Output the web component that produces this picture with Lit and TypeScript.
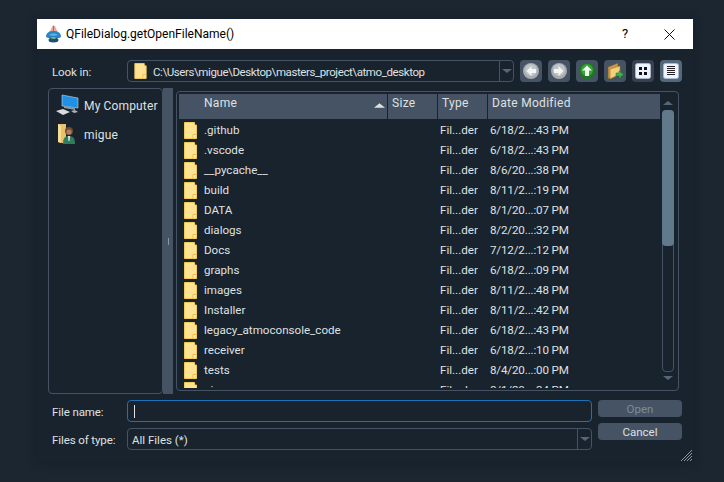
import { html, css, LitElement, svg } from "lit";
import { customElement } from "lit/decorators.js";

type FileRow = { name: string; date: string };

const ROWS: FileRow[] = [
  { name: ".github", date: "6/18/2...:43 PM" },
  { name: ".vscode", date: "6/18/2...:43 PM" },
  { name: "__pycache__", date: "8/6/20...:38 PM" },
  { name: "build", date: "8/11/2...:19 PM" },
  { name: "DATA", date: "8/1/20...:07 PM" },
  { name: "dialogs", date: "8/2/20...:32 PM" },
  { name: "Docs", date: "7/12/2...:12 PM" },
  { name: "graphs", date: "6/18/2...:09 PM" },
  { name: "images", date: "8/11/2...:48 PM" },
  { name: "Installer", date: "8/11/2...:42 PM" },
  { name: "legacy_atmoconsole_code", date: "6/18/2...:43 PM" },
  { name: "receiver", date: "6/18/2...:10 PM" },
  { name: "tests", date: "8/4/20...:00 PM" },
  { name: "ui", date: "8/1/20...:34 PM" },
];

const folder = (w = 13, h = 17) => html`<svg width=${w} height=${h} viewBox="0 0 13 17">
  <path d="M.5.5H10.5V3H12.5V16.5H.5Z" fill="#ffe392" stroke="#f3cb5a" />
  <path d="M9 16.5V12.5H12.5" fill="#fff0c0" stroke="#e8bb45" />
</svg>`;

const arrowCircle = (left: boolean) => html`<svg width="18" height="18" viewBox="0 0 18 18">
  <circle cx="9" cy="9" r="8" fill="#a7acb0" />
  <circle cx="9" cy="8" r="6" fill="#c0c4c7" />
  <path
    d=${left ? "M9.5 4L4.5 9L9.5 14V11H14V7H9.5Z" : "M8.5 4L13.5 9L8.5 14V11H4V7H8.5Z"}
    fill="#f4f5f5"
  />
</svg>`;

const caret = svg`<path d="M0 4L5 0L10 4Z" />`;

@customElement("app-root")
export class AppRoot extends LitElement {
  static styles = css`
    :host {
      display: block;
      width: 724px;
      height: 482px;
      overflow: hidden;
      background: #1b2631;
      font-family: Roboto, "Noto Sans", sans-serif;
      font-size: 12px;
      color: #dfe1e2;
    }
    .screen {
      padding: 19px 31px 20px 37px;
    }
    .window {
      position: relative;
      width: 656px;
      height: 443px;
      display: flex;
      flex-direction: column;
      background: #19232d;
      box-shadow: 0 0 10px rgba(10, 15, 20, 0.35);
    }
    .titlebar {
      height: 30px;
      flex: none;
      display: flex;
      align-items: center;
      background: #fff;
      color: #000;
      padding-left: 8px;
    }
    .title {
      margin-left: 4px;
      flex: 1;
    }
    .help {
      width: 16px;
      text-align: center;
      margin-right: 31px;
      font-size: 13px;
      padding-bottom: 2px;
    }
    .close {
      display: block;
      margin-right: 18px;
    }
    .body {
      flex: 1;
      display: flex;
      flex-direction: column;
      padding: 11px 11px 0;
    }
    .look {
      display: flex;
      height: 22px;
      align-items: center;
    }
    .label {
      width: 79px;
      padding: 2px 0 0 4px;
      box-sizing: border-box;
      flex: none;
      font-size: 11.5px;
      letter-spacing: -0.1px;
    }
    .combo {
      box-sizing: border-box;
      height: 22px;
      border: 1px solid #455364;
      border-radius: 4px;
      display: flex;
      align-items: center;
      flex: 1;
      min-width: 0;
    }
    .combo .value {
      flex: 1;
      display: flex;
      align-items: center;
      white-space: nowrap;
      font-size: 11.5px;
    }
    .path-text {
      padding-top: 2px;
      letter-spacing: -0.41px;
    }
    .path-icon {
      display: block;
      margin: 0 6px;
    }
    .drop {
      width: 13px;
      height: 100%;
      border-left: 1px solid #455364;
      display: flex;
      align-items: center;
      justify-content: center;
      flex: none;
    }
    .drop svg {
      display: block;
      fill: #54687a;
    }
    .tools {
      display: flex;
      gap: 6px;
      margin-left: 6px;
      flex: none;
    }
    .tool {
      width: 22px;
      height: 22px;
      border-radius: 4px;
      background: #455364;
      display: flex;
      align-items: center;
      justify-content: center;
    }
    .tool.dark {
      background: #37414f;
    }
    .tool.active {
      background: #54687a;
    }
    .middle {
      display: flex;
      height: 306px;
      margin-top: 6px;
    }
    .places {
      box-sizing: border-box;
      width: 115px;
      flex: none;
      border: 1px solid #455364;
      border-radius: 4px;
      padding: 2px 0 0 6px;
      display: flex;
      flex-direction: column;
      gap: 1px;
    }
    .place {
      display: flex;
      align-items: center;
      height: 28px;
      white-space: nowrap;
    }
    .place span {
      padding-top: 2px;
      letter-spacing: 0.15px;
    }
    .place svg {
      display: block;
      flex: none;
      margin-right: 5px;
    }
    .splitter {
      width: 10px;
      flex: none;
      background: #455364;
      display: flex;
      align-items: center;
      justify-content: center;
    }
    .splitter i {
      display: block;
      width: 1px;
      height: 7px;
      background: #8a97a5;
    }
    .pane {
      flex: 1;
      padding: 3px;
      min-width: 0;
    }
    .files {
      box-sizing: border-box;
      height: 100%;
      border: 1px solid #455364;
      border-radius: 4px;
      padding: 2px;
      display: flex;
    }
    .table {
      width: 481px;
      flex: none;
      display: flex;
      flex-direction: column;
    }
    .head {
      display: grid;
      grid-template-columns: 209px 50px 50px 1fr;
      height: 25px;
      flex: none;
    }
    .head div {
      position: relative;
      background: #455364;
      border-right: 1px solid #19232d;
      padding: 0 0 4px 4px;
      line-height: 19px;
      box-sizing: border-box;
      letter-spacing: 0.3px;
    }
    .head div:first-child {
      padding-left: 25px;
    }
    .head div:last-child {
      border-right: 0;
    }
    .sort {
      position: absolute;
      right: 2px;
      top: 9px;
      fill: #dfe1e2;
      display: block;
    }
    .rows {
      flex: 1;
      overflow: hidden;
      font-size: 11.6px;
    }
    .row {
      display: grid;
      grid-template-columns: 261px 50px 1fr;
      height: 20px;
      align-items: center;
      margin-top: 1px;
      margin-bottom: -1px;
    }
    .row .name {
      display: flex;
      align-items: center;
      padding-left: 5px;
    }
    .row .name svg {
      display: block;
      margin-right: 7px;
      flex: none;
    }
    .row .date {
      letter-spacing: -0.15px;
    }
    .scroll {
      flex: 1;
      display: flex;
      flex-direction: column;
      align-items: center;
      padding-top: 7px;
    }
    .scroll svg {
      display: block;
      fill: #54687a;
      flex: none;
    }
    .groove {
      box-sizing: border-box;
      width: 12px;
      height: 262px;
      margin-top: 5px;
      border: 1px solid #455364;
      border-radius: 4px;
      flex: none;
    }
    .thumb {
      height: 136px;
      margin: -1px;
      background: #60798b;
      border-radius: 4px;
    }
    .down {
      margin-top: 4px;
      transform: rotate(180deg);
    }
    .bottom {
      display: grid;
      grid-template-columns: 544px 90px;
      margin-top: 6px;
    }
    .input {
      box-sizing: border-box;
      height: 22px;
      border: 1px solid #1a72bb;
      border-radius: 4px;
      display: flex;
      align-items: center;
      padding-left: 6px;
    }
    .input i {
      display: block;
      width: 1px;
      height: 13px;
      background: #dfe1e2;
    }
    .buttons {
      grid-column: 2;
      grid-row: 1 / span 2;
      margin-left: 6px;
      display: flex;
      flex-direction: column;
      gap: 6px;
    }
    .btn {
      height: 17px;
      line-height: 19px;
      background: #455364;
      border-radius: 4px;
      text-align: center;
      font-size: 11.5px;
    }
    .btn.off {
      color: #788d9c;
    }
    .type-row {
      margin-top: 6px;
      display: flex;
      align-items: center;
      grid-column: 1;
    }
    .name-row {
      display: flex;
      align-items: center;
      grid-column: 1;
    }
    .name-row .input,
    .type-row .combo {
      flex: 1;
    }
    .type-row .value {
      padding: 2px 0 0 4px;
    }
    .grip {
      position: absolute;
      right: 1px;
      bottom: 1px;
      display: block;
      stroke: #8a97a5;
    }
  `;

  private renderFileRow(r: FileRow) {
    return html`<div class="row">
      <div class="name">${folder()}<span>${r.name}</span></div>
      <div class="type">Fil...der</div>
      <div class="date">${r.date}</div>
    </div>`;
  }

  render() {
    return html`<div class="screen">
      <div class="window">
        <div class="titlebar">
          <svg width="17" height="18" viewBox="0 0 17 18">
            <path d="M8 0L10 1L13 8H4Z" fill="#e9a99e" />
            <path d="M8.5 1V8" stroke="#c8604c" />
            <path d="M1 12C1 7 5 6 8.500 6S16 7 16 12C13 14 4 14 1 12Z" fill="#2c83c6" />
            <path d="M4 10C6 8 11 8 13 10C11 11 6 11 4 10Z" fill="#5cb4e6" />
            <ellipse cx="8.500" cy="15" rx="5" ry="2.500" fill="#1c4f78" />
            <ellipse cx="8.500" cy="13" rx="2.500" ry="1" fill="#6abf7a" />
          </svg>
          <span class="title">QFileDialog.getOpenFileName()</span>
          <span class="help">?</span>
          <svg class="close" width="11" height="11" viewBox="0 0 11 11">
            <path d="M.5.5L10.5 10.5M10.5.5L.5 10.5" stroke="#111" fill="none" />
          </svg>
        </div>
        <div class="body">
          <div class="look">
            <span class="label">Look in:</span>
            <div class="combo">
              <div class="value">
                <svg class="path-icon" width="13" height="16" viewBox="0 0 13 17">
                  <path d="M.5.5H10.5V3H12.5V16.5H.5Z" fill="#ffe392" stroke="#f3cb5a" />
                  <path d="M9 16.5V12.5H12.5" fill="#fff0c0" stroke="#e8bb45" />
                </svg>
                <span class="path-text">C:\\Users\\migue\\Desktop\\masters_project\\atmo_desktop</span>
              </div>
              <div class="drop"><svg width="10" height="4" viewBox="0 0 10 4" style="transform:rotate(180deg)">${caret}</svg></div>
            </div>
            <div class="tools">
              <div class="tool">${arrowCircle(true)}</div>
              <div class="tool">${arrowCircle(false)}</div>
              <div class="tool">
                <svg width="18" height="18" viewBox="0 0 18 18">
                  <circle cx="9" cy="9" r="8" fill="#1c7a1c" />
                  <circle cx="9" cy="8" r="6" fill="#3aa23a" />
                  <path d="M9 3.500L14 8.500H11V14H7V8.500H4Z" fill="#f4fbf2" />
                </svg>
              </div>
              <div class="tool">
                <svg width="18" height="18" viewBox="0 0 18 18">
                  <path d="M2 5L12 1V12L2 17Z" fill="#c99a48" stroke="#7a5a28" stroke-width=".6" />
                  <path d="M4 7L14 4V12L4 17Z" fill="#f5cf7c" stroke="#a57a34" stroke-width=".6" />
                  <path d="M11 10H14V8H16V10H18V13H16V15H14V13H11Z" transform="translate(-1 1)" fill="#39b54a" stroke="#1c6b28" stroke-width=".5" />
                </svg>
              </div>
              <div class="tool dark">
                <svg width="16" height="16" viewBox="0 0 16 16">
                  <rect x=".5" y=".5" width="15" height="15" rx="2" fill="#eef4ff" stroke="#aab8cc" />
                  <path d="M4 4h3v3H4zM9 4h3v3H9zM4 9h3v3H4zM9 9h3v3H9z" fill="#111" />
                </svg>
              </div>
              <div class="tool active">
                <svg width="16" height="16" viewBox="0 0 16 16">
                  <rect x=".5" y=".5" width="15" height="15" rx="2" fill="#eef4ff" stroke="#aab8cc" />
                  <path d="M4 3.500h8M4 5.500h8M4 7.500h8M4 9.500h8M4 11.500h8" stroke="#222" fill="none" />
                </svg>
              </div>
            </div>
          </div>
          <div class="middle">
            <div class="places">
              <div class="place">
                <svg width="24" height="22" viewBox="0 0 24 22">
                  <path d="M7 1L23 4V14L7 12Z" fill="#1e90e6" stroke="#cfd6dc" stroke-width=".6" />
                  <path d="M9 12L20 14V16L9 14Z" fill="#8b98a3" />
                  <path d="M1 17L8 15L15 18L8 21Z" fill="#d7dcdf" />
                  <path d="M16 17L20 16L23 18L19 19Z" fill="#aab2b8" />
                </svg>
                <span>My Computer</span>
              </div>
              <div class="place">
                <svg width="24" height="22" viewBox="0 0 24 22">
                  <path d="M3 1H11V21L3 19Z" fill="#e8c070" />
                  <path d="M3 1L6 3V20L3 19Z" fill="#f8dc90" />
                  <circle cx="14" cy="8" r="4" fill="#6b4a34" />
                  <circle cx="14" cy="9" r="2.600" fill="#b07e5c" />
                  <path d="M8 21C8 15 10 13 14 13S20 15 20 21Z" fill="#2f7d5c" />
                  <path d="M13 13H15L14.500 18H13.500Z" fill="#e6eee8" />
                </svg>
                <span>migue</span>
              </div>
            </div>
            <div class="splitter"><i></i></div>
            <div class="pane">
              <div class="files">
                <div class="table">
                  <div class="head">
                    <div>
                      Name
                      <svg class="sort" width="11" height="5" viewBox="0 0 10 4">${caret}</svg>
                    </div>
                    <div>Size</div>
                    <div>Type</div>
                    <div>Date Modified</div>
                  </div>
                  <div class="rows">${ROWS.map((r) => this.renderFileRow(r))}</div>
                </div>
                <div class="scroll">
                  <svg width="10" height="4" viewBox="0 0 10 4">${caret}</svg>
                  <div class="groove"><div class="thumb"></div></div>
                  <svg class="down" width="10" height="4" viewBox="0 0 10 4">${caret}</svg>
                </div>
              </div>
            </div>
          </div>
          <div class="bottom">
            <div class="name-row">
              <span class="label">File name:</span>
              <div class="input"><i></i></div>
            </div>
            <div class="type-row">
              <span class="label">Files of type:</span>
              <div class="combo">
                <div class="value">All Files (*)</div>
                <div class="drop"><svg width="10" height="4" viewBox="0 0 10 4" style="transform:rotate(180deg)">${caret}</svg></div>
              </div>
            </div>
            <div class="buttons">
              <div class="btn off">Open</div>
              <div class="btn">Cancel</div>
            </div>
          </div>
        </div>
        <svg class="grip" width="11" height="11" viewBox="0 0 11 11">
          <path d="M0 11L11 0M3 11L11 3M6 11L11 6M9 11L11 9" fill="none" />
        </svg>
      </div>
    </div>`;
  }
}

declare global {
  interface HTMLElementTagNameMap {
    "app-root": AppRoot;
  }
}
